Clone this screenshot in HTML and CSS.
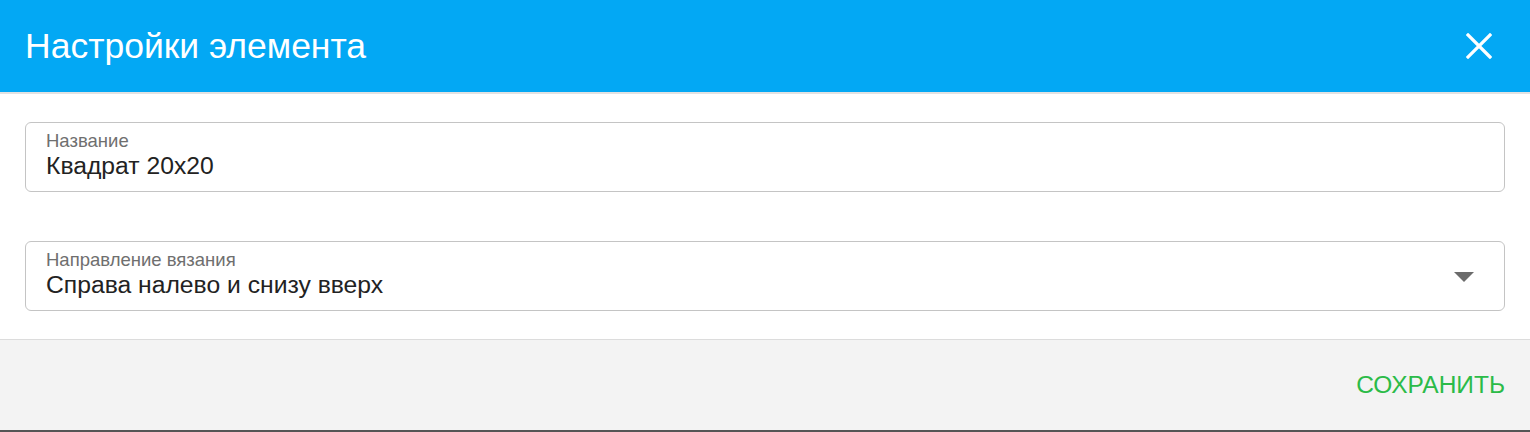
FILE: index.html
```html
<!DOCTYPE html>
<html lang="ru">
<head>
  <meta charset="UTF-8" />
  <meta name="viewport" content="width=device-width, initial-scale=1.0"/>
  <title>Настройки элемента</title>
  <link rel="stylesheet" href="styles.css">
</head>
<body>
  <div class="dialog">
    <!-- Header -->
    <div class="dialog-header">
      <h2>Настройки элемента</h2>
      <button class="close-btn" type="button" aria-label="Закрыть">
        <svg width="26" height="26" viewBox="0 0 26 26">
          <path d="M2 2 L24 24 M24 2 L2 24" stroke="#fff" stroke-width="3.2" stroke-linecap="square" fill="none"/>
        </svg>
      </button>
    </div>

    <!-- Body -->
    <div class="dialog-body">
      <label class="field">
        <span class="field-label">Название</span>
        <input class="field-input" type="text" value="Квадрат 20x20" />
      </label>

      <label class="field field-select">
        <span class="field-label">Направление вязания</span>
        <span class="field-value">Справа налево и снизу вверх</span>
        <svg class="arrow" width="20" height="10" viewBox="0 0 20 10">
          <polygon points="0,0 20,0 10,10" fill="#6b6b6b"/>
        </svg>
      </label>
    </div>

    <!-- Footer -->
    <div class="dialog-footer">
      <button class="save-btn" type="button">СОХРАНИТЬ</button>
    </div>
  </div>
</body>
</html>
```

FILE: styles.css
```css
body {
  margin: 0;
  font-family: "Liberation Sans", Arial, sans-serif;
  background: #fff;
}
.dialog {
  width: 1530px;
  height: 432px;
  display: flex;
  flex-direction: column;
}
.dialog-header {
  height: 92px;
  background: #03a8f4;
  border-bottom: 2px solid #e2e2e2;
  display: flex;
  align-items: center;
  justify-content: space-between;
  padding: 0 25px;
}
.dialog-header h2 {
  margin: 0;
  color: #fff;
  font-weight: normal;
  font-size: 35.5px;
}
.close-btn {
  background: none;
  border: none;
  padding: 0;
  margin-right: 13px;
  cursor: pointer;
  display: flex;
}
.dialog-body {
  padding: 28px 25px 28px;
  display: flex;
  flex-direction: column;
  gap: 49px;
}
.field {
  position: relative;
  display: flex;
  flex-direction: column;
  height: 70px;
  box-sizing: border-box;
  border: 1px solid #c4c4c4;
  border-radius: 6px;
  padding: 8px 20px 0;
  font-family: "Liberation Sans", Arial, sans-serif;
}
.field-label {
  font-size: 18.5px;
  line-height: 20px;
  color: #6f6f6f;
}
.field-input,
.field-value {
  font-family: "Liberation Sans", Arial, sans-serif;
  font-size: 24.7px;
  line-height: 30px;
  color: #222;
  border: none;
  outline: none;
  padding: 0;
  margin: 0;
  background: transparent;
}
.arrow {
  position: absolute;
  right: 30px;
  top: 30px;
}
.dialog-footer {
  flex: 1;
  background: #f3f3f3;
  border-top: 1px solid #dcdcdc;
  border-bottom: 2px solid #555;
  display: flex;
  align-items: center;
  justify-content: flex-end;
  padding: 0 25px;
}
.save-btn {
  background: none;
  border: none;
  padding: 0;
  color: #2bbb48;
  font-family: "Liberation Sans", Arial, sans-serif;
  font-size: 24.5px;
  cursor: pointer;
}
```
